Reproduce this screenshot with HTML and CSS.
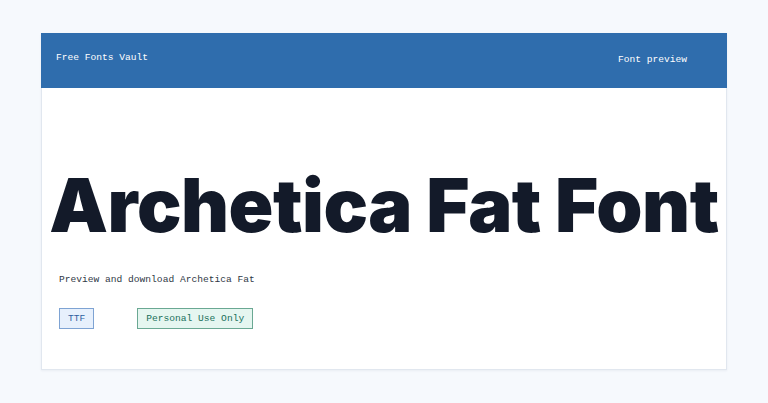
FILE: index.html
```html
<!DOCTYPE html>
<html lang="en">
<head>
  <meta charset="UTF-8" />
  <title>Archetica Fat Font - Free Fonts Vault</title>
  <link rel="stylesheet" href="styles.css">
</head>
<body>

<div class="card">
  <header>
    <div class="brand">Free Fonts Vault</div>
    <nav>
      <a href="#" class="nav-link">Font preview</a>
    </nav>
  </header>

  <main>
    <h1 class="font-title">Archetica Fat Font</h1>
    <p class="subtitle">Preview and download Archetica Fat</p>
    <div class="tags">
      <span class="tag tag-format">TTF</span>
      <span class="tag tag-license">Personal Use Only</span>
    </div>
  </main>
</div>

</body>
</html>
```

FILE: styles.css
```css
body {
  background: #f6f9fd;
  margin: 0;
  padding: 33px 41px;
  font-family: 'Liberation Mono', monospace;
  font-size: 9.6px;
}
.card {
  background: #fff;
  border: 1px solid #e1e7ef;
  border-top: none;
  height: 337px;
  box-sizing: border-box;
  box-shadow: 0 1px 2px rgba(30, 50, 80, 0.06);
}
header {
  background: #2f6dad;
  color: #fff;
  height: 55px;
  display: flex;
  justify-content: space-between;
  padding: 0 40px 0 15px;
  margin: 0 -1px;
}
.brand {
  margin-top: 19px;
}
nav {
  margin-top: 21px;
}
.nav-link {
  color: #fff;
  text-decoration: none;
}
main {
  padding: 0 17px;
}
.font-title {
  font-family: 'Inter', sans-serif;
  font-weight: 900;
  font-size: 74px;
  line-height: 1;
  color: #131a29;
  text-align: center;
  white-space: nowrap;
  margin: 80px -17px 0;
  letter-spacing: -0.5px;
}
.subtitle {
  color: #2f3846;
  margin: 31px 0 0;
  line-height: 14px;
}
.tags {
  display: flex;
  gap: 43px;
  margin-top: 21px;
}
.tag {
  display: inline-block;
  height: 21px;
  line-height: 19px;
  box-sizing: border-box;
  padding: 0 8px;
  border: 1px solid;
}
.tag-format {
  background: #e7f0fc;
  border-color: #7ea3d3;
  color: #2f5f9f;
}
.tag-license {
  background: #e5f6f0;
  border-color: #6aa893;
  color: #18705a;
}
```
